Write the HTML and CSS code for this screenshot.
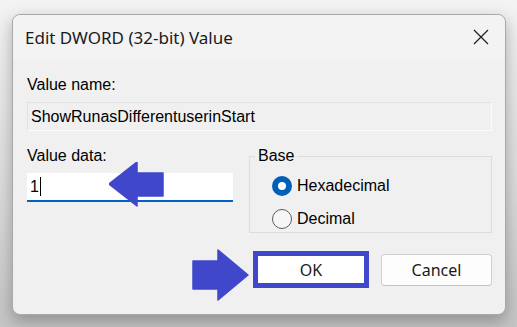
FILE: index.html
```html
<!DOCTYPE html>
<html lang="en">
<head>
<meta charset="UTF-8" />
<title>Edit DWORD (32-bit) Value</title>
<link rel="stylesheet" href="styles.css">
</head>
<body>
<div class="window">
  <!-- Title bar -->
  <div class="titlebar">
    <span class="title">Edit DWORD (32-bit) Value</span>
    <button class="close" title="Close">
      <svg width="16" height="16" viewBox="0 0 16 16"><path d="M1 1 L15 15 M15 1 L1 15" stroke="#1b1b1b" stroke-width="1.2" fill="none"/></svg>
    </button>
  </div>

  <div class="content">
    <div class="label">Value name:</div>
    <div class="name-field">ShowRunasDifferentuserinStart</div>

    <div class="row">
      <div class="data-col">
        <div class="label">Value data:</div>
        <div class="data-field">1<span class="caret"></span></div>
      </div>

      <fieldset class="base">
        <legend>Base</legend>
        <label class="radio"><span class="dot checked"></span>Hexadecimal</label>
        <label class="radio"><span class="dot"></span>Decimal</label>
      </fieldset>
    </div>

    <div class="buttons">
      <button class="btn ok">OK</button>
      <button class="btn">Cancel</button>
    </div>
  </div>

  <!-- annotation arrows -->
  <svg class="arrow arrow-left" width="56" height="46" viewBox="0 0 56 46">
    <path d="M0 22 L28 0 L28 11 L54 11 L54 34 L28 34 L28 44 Z" fill="#4047cb" stroke="#4047cb" stroke-width="1.5" stroke-linejoin="round"/>
  </svg>
  <svg class="arrow arrow-right" width="58" height="53" viewBox="0 0 58 53">
    <path d="M1 12 L26 12 L26 1 L56 26 L26 51 L26 40 L1 40 Z" fill="#4047cb" stroke="#4047cb" stroke-width="1.5" stroke-linejoin="round"/>
  </svg>
</div>
</body>
</html>
```

FILE: styles.css
```css
body {
  margin: 0;
  height: 327px;
  overflow: hidden;
  background: linear-gradient(#f3f3f3, #dadada 60%, #c4c4c4);
  font-family: "Liberation Sans", Arial, sans-serif;
  font-size: 16px;
  color: #000;
}
.window {
  position: relative;
  margin: 14px 0 0 12px;
  width: 492px;
  height: 299px;
  background: #f0f0f0;
  border: 1px solid #a9a9a9;
  border-radius: 8px;
  box-shadow: 0 6px 16px rgba(0,0,0,0.28);
}
.titlebar {
  height: 44px;
  display: flex;
  align-items: center;
  justify-content: space-between;
  padding-left: 12px;
  background: #f3f3f3;
  border-radius: 8px 8px 0 0;
}
.title {
  font-family: "Noto Sans", sans-serif;
  font-size: 17px;
  color: #1a1a1a;
}
.close {
  border: 0;
  background: none;
  width: 46px;
  height: 44px;
  padding: 0;
  margin-right: 1px;
  display: flex;
  align-items: center;
  justify-content: center;
}
.content {
  padding: 17px 13px 0 14px;
}
.label {
  line-height: 18px;
}
.name-field {
  margin-top: 8px;
  height: 27px;
  line-height: 27px;
  padding-left: 3px;
  border: 1px solid #e2e2e2;
  border-right-color: #fbfbfb;
  border-bottom-color: #fbfbfb;
}
.row {
  display: grid;
  grid-template-columns: 206px 243px;
  justify-content: space-between;
  margin-top: 16px;
}
.data-field {
  margin-top: 8px;
  height: 27px;
  line-height: 27px;
  padding-left: 3px;
  background: #fff;
  border-bottom: 2px solid #0063c1;
}
.caret {
  display: inline-block;
  width: 1px;
  height: 19px;
  background: #000;
  vertical-align: -4px;
  margin-left: 1px;
}
.base {
  margin: 0;
  padding: 0 0 10px 5px;
  height: 86px;
  box-sizing: border-box;
  border: 1px solid #dcdcdc;
}
.base legend {
  padding: 0 3px;
  line-height: 18px;
}
.radio {
  display: flex;
  align-items: center;
  height: 33px;
  margin-left: 17px;
}
.radio:first-of-type {
  margin-top: 4px;
}
.dot {
  width: 18px;
  height: 18px;
  border: 1px solid #5c5c5c;
  border-radius: 50%;
  background: #f6f6f6;
  margin-right: 5px;
  box-sizing: content-box;
}
.dot.checked {
  width: 8px;
  height: 8px;
  border: 6px solid #005fb8;
  background: #fff;
}
.buttons {
  display: flex;
  justify-content: flex-end;
  align-items: center;
  gap: 12px;
  margin-top: 18px;
}
.btn {
  font-family: "Noto Sans", sans-serif;
  font-size: 16px;
  color: #1a1a1a;
  width: 111px;
  height: 32px;
  background: #fdfdfd;
  border: 1px solid #d0d0d0;
  border-bottom-color: #c2c2c2;
  border-radius: 4px;
  padding: 0;
}
.btn.ok {
  width: 116px;
  height: 37px;
  border: 5px solid #4047cb;
  border-radius: 0;
  background: #fff;
}
.arrow {
  position: absolute;
}
.arrow-left {
  left: 96px;
  top: 147px;
}
.arrow-right {
  left: 179px;
  top: 234px;
}
```
